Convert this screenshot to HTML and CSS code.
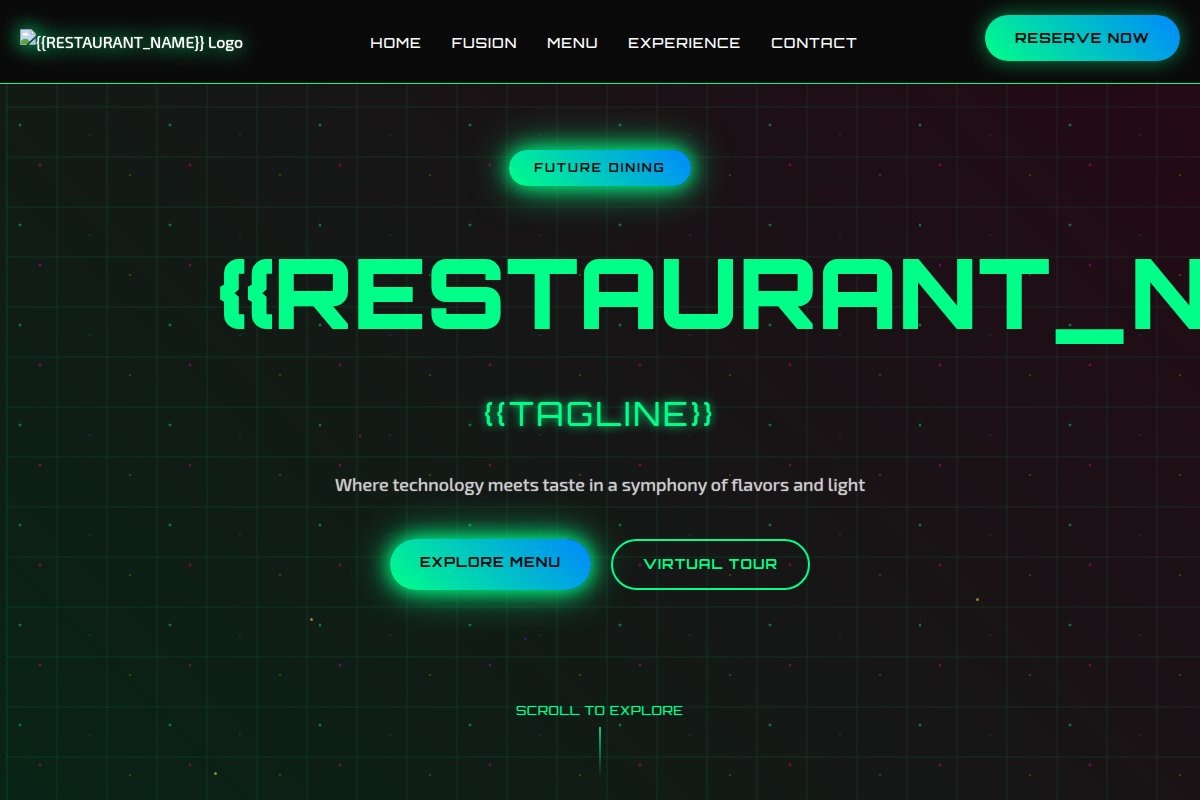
FILE: index.html
```html
<!DOCTYPE html>
<html lang="en">
<head>
<meta charset="utf-8">
<meta name="viewport" content="width=device-width, initial-scale=1">
<title>{{RESTAURANT_NAME}}</title>
<link rel="stylesheet" href="styles.css">
</head>
<body>
<div class="page">
  <div class="grid-lines"></div>
  <div class="dots"></div>
  <div class="particles">
    <span class="particle pink"></span>
    <span class="particle yellow one"></span>
    <span class="particle yellow two"></span>
    <span class="particle yellow three"></span>
    <span class="particle purple"></span>
  </div>

  <header class="header">
    <a class="logo" href="#home">
      <svg class="logo-image" width="16" height="16" viewBox="0 0 16 16" aria-hidden="true">
        <path d="M0.500 0.500H11L15.500 5V8L8 15.500H0.500Z" fill="#c3d6f7" stroke="#a0a0a0"/>
        <path d="M1 15V12C3 9.500 6 9 8 10.500L10 13L8 15Z" fill="#54a83c"/>
        <path d="M3 6.500C2 5 3.500 4 4.500 4.500C5 3 7 3 7.300 4.700C8.500 4.700 8.500 6.500 7.500 6.500Z" fill="#fff"/>
        <path d="M11 0.500V5H15.500Z" fill="#fff" stroke="#a0a0a0"/>
        <path d="M8.500 15.500L15.500 9V15.500Z" fill="#a9c9ef"/>
        <path d="M7 16L16 7.500" stroke="#0a4a2c" stroke-width="1.500"/>
        <path d="M10 15.500H15.500V11" fill="none" stroke="#a0a0a0"/>
      </svg><span>{{RESTAURANT_NAME}} Logo</span>
    </a>
    <nav class="nav" aria-label="Main">
      <a href="#home">HOME</a>
      <a href="#fusion">FUSION</a>
      <a href="#menu">MENU</a>
      <a href="#experience">EXPERIENCE</a>
      <a href="#contact">CONTACT</a>
    </nav>
    <button class="reserve" type="button">RESERVE NOW</button>
  </header>

  <main class="hero" id="home">
    <div class="hero-content">
      <span class="badge">FUTURE DINING</span>
      <h1 class="title">{{RESTAURANT_NAME}}</h1>
      <p class="tagline">{{TAGLINE}}</p>
      <p class="description">Where technology meets taste in a symphony of flavors and light</p>
      <div class="actions">
        <a class="action primary" href="#menu">EXPLORE MENU</a>
        <a class="action outline" href="#experience">VIRTUAL TOUR</a>
      </div>
    </div>
    <div class="scroll">
      <span>SCROLL TO EXPLORE</span>
      <div class="scroll-line"></div>
    </div>
  </main>
</div>
</body>
</html>
```
FILE: styles.css
```css
:root {
  --green: #00ff88;
  --blue: #0088ff;
  --dark: #0a0a0a;
  --display: Orbitron, "DejaVu Sans", sans-serif;
  --text: "Exo 2", Roboto, sans-serif;
}

* {
  box-sizing: border-box;
}

body {
  margin: 0;
  background: var(--dark);
  color: #fff;
  font-family: var(--text);
  font-size: 16px;
  font-weight: 400;
}

a {
  color: inherit;
  text-decoration: none;
}

.page {
  position: relative;
  isolation: isolate;
  display: flex;
  flex-direction: column;
  min-height: 100vh;
  overflow: hidden;
  background: linear-gradient(45deg, #082415 0%, #161616 50%, #250815 100%);
}

.grid-lines,
.dots,
.particles {
  position: absolute;
  inset: 0;
  z-index: -1;
}

.grid-lines {
  inset: 6px 0 0 6px;
  background-image:
    linear-gradient(rgba(0, 255, 136, 0.05) 2px, transparent 2px),
    linear-gradient(90deg, rgba(0, 255, 136, 0.05) 2px, transparent 2px);
  background-size: 50px 50px;
  border-left: 1px solid rgba(0, 255, 136, 0.06);
  background-origin: border-box;
}

.dots {
  background-image:
    radial-gradient(2px 2px at 20px 25px, #00ff88, transparent),
    radial-gradient(2px 2px at 40px 65px, #ff0088, transparent),
    radial-gradient(1px 1px at 90px 35px, #0088ff, transparent),
    radial-gradient(1px 1px at 130px 75px, #ffff00, transparent);
  background-size: 150px 100px;
  opacity: 0.6;
}

.particle {
  position: absolute;
  width: 3px;
  height: 3px;
  border-radius: 50%;
  background: currentColor;
  box-shadow: 0 0 10px rgba(255, 255, 255, 0.1);
  opacity: 0.5;
}

.pink {
  left: 29.9%;
  top: 54.4%;
  width: 2px;
  color: #ff0088;
}

.yellow {
  color: #ffff00;
}

.one {
  left: 25.8%;
  top: 77.3%;
}

.two {
  left: 81.3%;
  top: 74.7%;
}

.three {
  left: 17.8%;
  top: 96.5%;
}

.purple {
  left: 43.7%;
  top: 79.8%;
  height: 2px;
  color: #6a1bd0;
}

.header {
  display: flex;
  align-items: center;
  justify-content: space-between;
  min-height: 84px;
  padding: 15px 20px;
  background: var(--dark);
  border-bottom: 1px solid var(--green);
}

.logo {
  display: flex;
  align-items: flex-start;
  line-height: 26px;
  text-shadow: 0 0 1px #fff;
  filter: drop-shadow(0 0 10px var(--green));
}

.nav {
  display: flex;
  gap: 30px;
  padding-top: 2px;
  font-family: var(--display);
  font-size: 14px;
  font-weight: 500;
  letter-spacing: 1px;
}

.reserve {
  align-self: flex-start;
  height: 46px;
  padding: 0 30px 2px;
  border: 0;
  border-radius: 25px;
  background: linear-gradient(45deg, var(--green), var(--blue));
  box-shadow: 0 0 20px rgba(0, 255, 136, 0.5);
  color: var(--dark);
  font-family: var(--display);
  font-size: 14px;
  font-weight: 700;
  letter-spacing: 1px;
}

.hero {
  flex: 1;
  display: flex;
  flex-direction: column;
  align-items: center;
  justify-content: space-between;
  padding: 66px 20px 23px;
  font-family: var(--display);
  text-align: center;
}

.hero-content {
  width: 100%;
  max-width: 764px;
}

.badge {
  display: block;
  width: fit-content;
  margin: 0 auto;
  padding: 0 25px;
  border-radius: 20px;
  background: linear-gradient(45deg, var(--green), var(--blue));
  box-shadow: 0 0 20px var(--green), 0 0 40px rgba(0, 255, 136, 0.8);
  color: var(--dark);
  font-size: 12px;
  font-weight: 700;
  letter-spacing: 2px;
  line-height: 36px;
}

.title {
  margin: 53px 0 49px;
  color: var(--green);
  font-size: 96px;
  font-weight: 900;
  line-height: 106px;
  white-space: nowrap;
}

.tagline {
  margin: 0 0 35px;
  color: var(--green);
  font-size: 32px;
  font-weight: 400;
  letter-spacing: 3px;
  line-height: 40px;
  text-shadow: 0 0 1px var(--green), 0 0 10px var(--green);
}

.description {
  margin: 0 0 40px;
  color: #ccc;
  font-family: var(--text);
  font-size: 18px;
  line-height: 30px;
  text-shadow: 0 0 1px #ccc;
}

.actions {
  display: flex;
  flex-wrap: wrap;
  justify-content: center;
  gap: 20px;
}

.action {
  padding: 13px 30px 15px;
  border-radius: 26px;
  font-size: 14px;
  font-weight: 700;
  letter-spacing: 1px;
  line-height: 19px;
}

.primary {
  background: linear-gradient(45deg, var(--green), var(--blue));
  box-shadow: 0 0 20px var(--green), 0 0 40px rgba(0, 255, 136, 0.8);
  color: var(--dark);
}

.outline {
  border: 2px solid var(--green);
  color: var(--green);
}

.scroll {
  display: flex;
  flex-direction: column;
  align-items: center;
  gap: 7px;
  color: var(--green);
  font-size: 12px;
  font-weight: 400;
  letter-spacing: 1px;
  line-height: 18px;
  text-shadow: 0 0 1px var(--green);
}

.scroll-line {
  width: 2px;
  height: 50px;
  background: linear-gradient(var(--green), transparent);
  opacity: 0.8;
}
```
